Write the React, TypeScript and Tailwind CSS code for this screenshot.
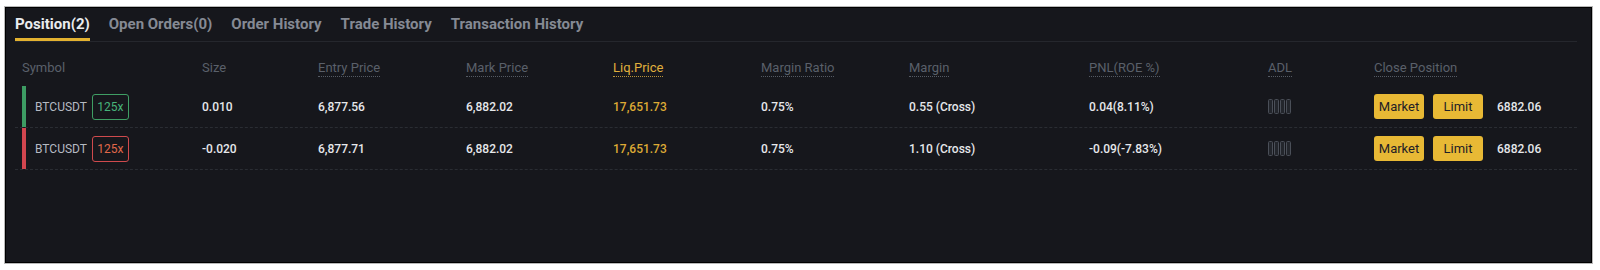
const font = { fontFamily: "Roboto, 'Noto Sans', sans-serif" };

type Position = {
  size: string;
  entry: string;
  mark: string;
  liq: string;
  ratio: string;
  margin: string;
  pnl: string;
  side: "long" | "short";
  last: string;
};

const positions: Position[] = [
  {
    size: "0.010",
    entry: "6,877.56",
    mark: "6,882.02",
    liq: "17,651.73",
    ratio: "0.75%",
    margin: "0.55 (Cross)",
    pnl: "0.04(8.11%)",
    side: "long",
    last: "6882.06",
  },
  {
    size: "-0.020",
    entry: "6,877.71",
    mark: "6,882.02",
    liq: "17,651.73",
    ratio: "0.75%",
    margin: "1.10 (Cross)",
    pnl: "-0.09(-7.83%)",
    side: "short",
    last: "6882.06",
  },
];

const tabs = ["Position(2)", "Open Orders(0)", "Order History", "Trade History", "Transaction History"];

const cols =
  "grid grid-cols-[180px_116px_148px_147px_148px_148px_180px_179px_106px_1fr] items-center";

function Dotted({ children, yellow }: { children: React.ReactNode; yellow?: boolean }) {
  return (
    <span
      className={
        yellow
          ? "border-b border-dotted border-[#b8923a] pb-[1px] text-[#e0b03c]"
          : "border-b border-dotted border-[#555b64] pb-[1px]"
      }
    >
      {children}
    </span>
  );
}

function AdlIcon() {
  return (
    <svg width="24" height="15" viewBox="0 0 24 15">
      {[0, 6, 12, 18].map((x) => (
        <rect
          key={x}
          x={x + 0.5}
          y={0.5}
          width={4}
          height={14}
          rx={1}
          fill="#23262c"
          stroke="#4a4f58"
        />
      ))}
    </svg>
  );
}

export default function App() {
  return (
    <div className="h-[270px] w-full bg-white pt-[6px] pl-[4px]" style={font}>
      <div className="h-[258px] w-[1589px] border border-[#b8b8b8]">
        <div className="h-full border border-black bg-[#16171c] pl-[9px] pr-[14px]">
          {/* tabs */}
          <div className="flex h-[34px] gap-[19px] border-b border-[#25272d]">
            {tabs.map((t, i) => (
              <div
                key={t}
                className={
                  i === 0
                    ? "flex items-center border-b-[3px] border-[#e3b230] pt-[3px] text-[15px] font-bold text-[#eaecef]"
                    : "flex items-center border-b-[3px] border-transparent pt-[3px] text-[15px] font-bold text-[#858a94]"
                }
              >
                {t}
              </div>
            ))}
          </div>

          {/* header */}
          <div className={`${cols} h-[44px] pt-[8px] pl-[7px] text-[13px] text-[#5a606a]`}>
            <span>Symbol</span>
            <span>Size</span>
            <span><Dotted>Entry Price</Dotted></span>
            <span><Dotted>Mark Price</Dotted></span>
            <span><Dotted yellow>Liq.Price</Dotted></span>
            <span><Dotted>Margin Ratio</Dotted></span>
            <span><Dotted>Margin</Dotted></span>
            <span><Dotted>PNL(ROE %)</Dotted></span>
            <span><Dotted>ADL</Dotted></span>
            <span><Dotted>Close Position</Dotted></span>
          </div>

          {/* rows */}
          {positions.map((p, i) => {
            const long = p.side === "long";
            return (
              <div
                key={i}
                className={`${cols} h-[42px] border-b border-dashed border-[#2a2d33] pl-[7px] text-[12px] font-medium text-[#e6e8eb]`}
              >
                <div className="flex h-full items-center">
                  <div className={long ? "h-full w-[4px] bg-[#3d9c63]" : "h-full w-[4px] bg-[#d2464f]"} />
                  <span className="ml-[9px] font-normal text-[#b5bac2]">BTCUSDT</span>
                  <span
                    className={
                      long
                        ? "ml-[5px] flex h-[26px] w-[37px] items-center justify-center rounded-[3px] border border-[#3f9e64] font-normal text-[#47b37a]"
                        : "ml-[5px] flex h-[26px] w-[37px] items-center justify-center rounded-[3px] border border-[#cf4a4d] font-normal text-[#e0684a]"
                    }
                  >
                    125x
                  </span>
                </div>
                <span>{p.size}</span>
                <span>{p.entry}</span>
                <span>{p.mark}</span>
                <span className="text-[#ddaa35]">{p.liq}</span>
                <span>{p.ratio}</span>
                <span>{p.margin}</span>
                <span>{p.pnl}</span>
                <span className="flex items-center">
                  <AdlIcon />
                </span>
                <div className="flex items-center">
                  <button className="h-[25px] w-[50px] rounded-[3px] bg-[#e8b935] text-[13px] font-normal text-[#1e2026]">
                    Market
                  </button>
                  <button className="ml-[9px] h-[25px] w-[50px] rounded-[3px] bg-[#e8b935] text-[13px] font-normal text-[#1e2026]">
                    Limit
                  </button>
                  <span className="ml-[14px]">{p.last}</span>
                </div>
              </div>
            );
          })}
        </div>
      </div>
    </div>
  );
}
